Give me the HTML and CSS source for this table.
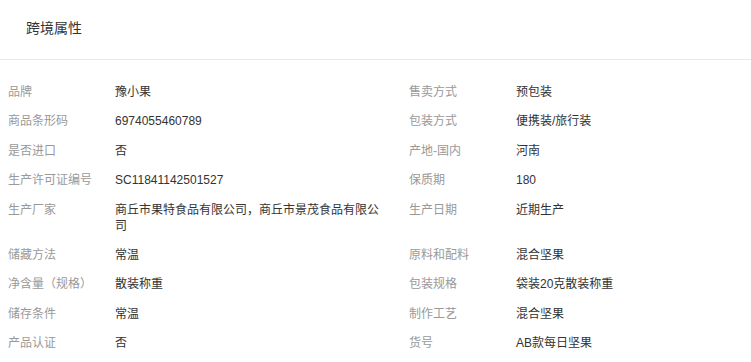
FILE: index.html
```html
<!DOCTYPE html>
<html lang="zh-CN">
<head>
    <meta charset="UTF-8">
    <meta name="viewport" content="width=device-width, initial-scale=1.0">
    <title>跨境属性</title>
    <link rel="stylesheet" href="styles.css">
</head>
<body>
    <div class="panel">
        <div class="panel-title">跨境属性</div>
        <div class="attrs">
            <div class="attr"><span class="attr-name">品牌</span><span class="attr-value">豫小果</span></div>
            <div class="attr"><span class="attr-name">售卖方式</span><span class="attr-value">预包装</span></div>

            <div class="attr"><span class="attr-name">商品条形码</span><span class="attr-value">6974055460789</span></div>
            <div class="attr"><span class="attr-name">包装方式</span><span class="attr-value">便携装/旅行装</span></div>

            <div class="attr"><span class="attr-name">是否进口</span><span class="attr-value">否</span></div>
            <div class="attr"><span class="attr-name">产地-国内</span><span class="attr-value">河南</span></div>

            <div class="attr"><span class="attr-name">生产许可证编号</span><span class="attr-value">SC11841142501527</span></div>
            <div class="attr"><span class="attr-name">保质期</span><span class="attr-value">180</span></div>

            <div class="attr"><span class="attr-name">生产厂家</span><span class="attr-value">商丘市果特食品有限公司，商丘市景茂食品有限公司</span></div>
            <div class="attr"><span class="attr-name">生产日期</span><span class="attr-value">近期生产</span></div>

            <div class="attr"><span class="attr-name">储藏方法</span><span class="attr-value">常温</span></div>
            <div class="attr"><span class="attr-name">原料和配料</span><span class="attr-value">混合坚果</span></div>

            <div class="attr"><span class="attr-name">净含量（规格）</span><span class="attr-value">散装称重</span></div>
            <div class="attr"><span class="attr-name">包装规格</span><span class="attr-value">袋装20克散装称重</span></div>

            <div class="attr"><span class="attr-name">储存条件</span><span class="attr-value">常温</span></div>
            <div class="attr"><span class="attr-name">制作工艺</span><span class="attr-value">混合坚果</span></div>

            <div class="attr"><span class="attr-name">产品认证</span><span class="attr-value">否</span></div>
            <div class="attr"><span class="attr-name">货号</span><span class="attr-value">AB款每日坚果</span></div>
        </div>
    </div>
</body>
</html>
```

FILE: styles.css
```css
body {
    margin: 0;
    background-color: #fff;
    font-family: "Liberation Sans", "Noto Sans CJK SC", sans-serif;
    color: #333;
}

.panel {
    width: 751px;
}

.panel-title {
    padding: 18px 0 21px 26px;
    font-size: 14px;
    line-height: 20px;
    color: #333;
    border-bottom: 1px solid #e8e8e8;
}

.attrs {
    display: grid;
    grid-template-columns: 401px 1fr;
    padding: 17px 0 0 8px;
}

.attr {
    display: flex;
    font-size: 12px;
    line-height: 16px;
    padding: 7px 0 6.4px;
}

.attr-name {
    flex: 0 0 107px;
    color: #999;
}

.attr-value {
    flex: 1;
    padding-right: 24px;
    color: #333;
}
```
